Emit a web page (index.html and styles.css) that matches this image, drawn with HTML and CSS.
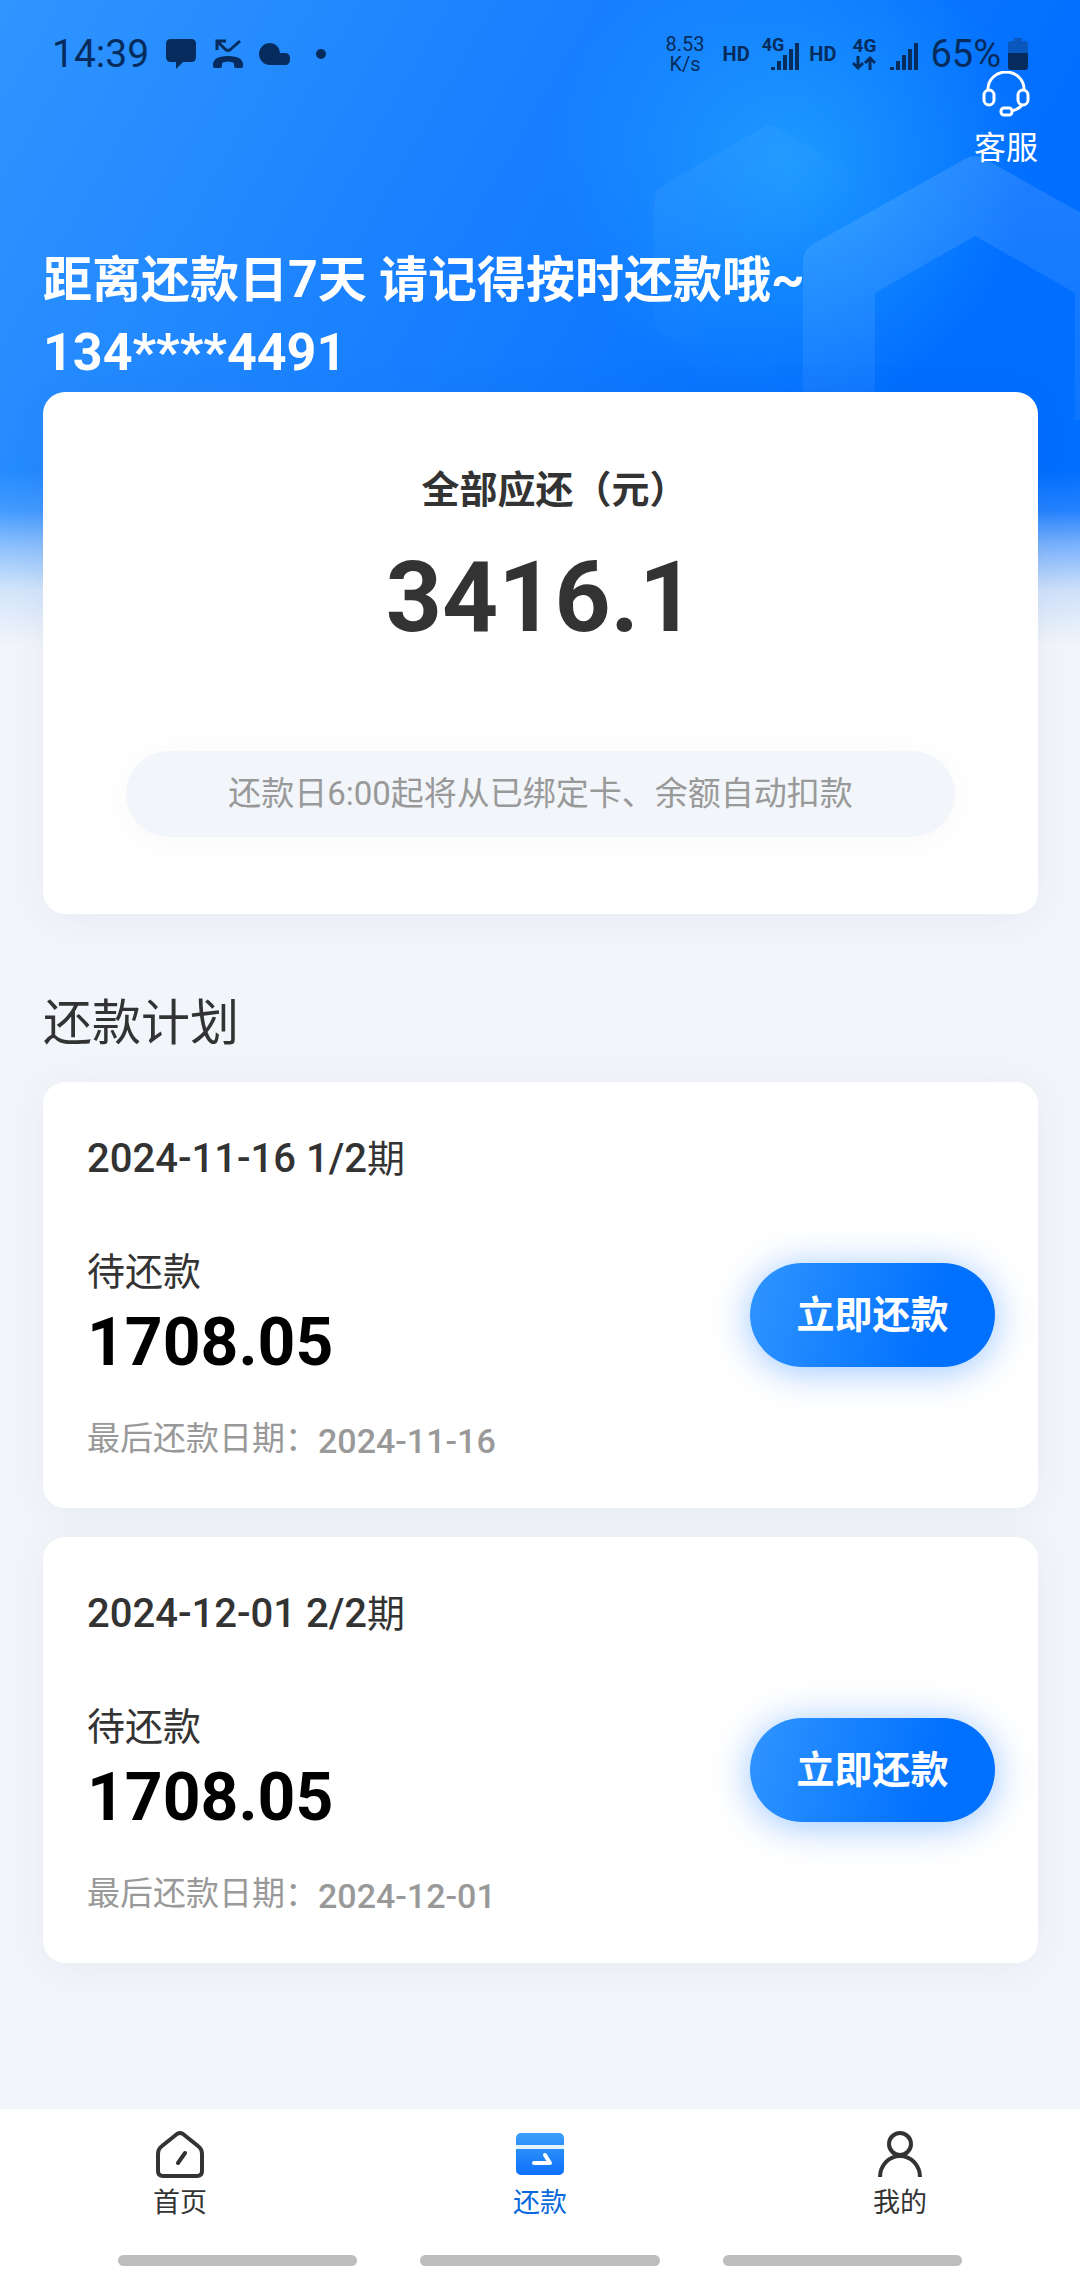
FILE: index.html
```html
<!DOCTYPE html>
<html lang="zh-CN">
<head>
<meta charset="utf-8">
<meta name="viewport" content="width=device-width, initial-scale=1">
<title>还款</title>
<link rel="stylesheet" href="styles.css">
</head>
<body>
<div class="page">
  <svg class="backdrop" viewBox="0 0 480 640" aria-hidden="true">
    <defs>
      <linearGradient id="band" x1="0" y1="0" x2="0" y2="1">
        <stop offset="0" stop-color="#fff" stop-opacity=".12"/>
        <stop offset="1" stop-color="#fff" stop-opacity=".05"/>
      </linearGradient>
      <linearGradient id="hex" x1="0" y1="0" x2=".8" y2=".9">
        <stop offset="0" stop-color="#fff" stop-opacity=".06"/>
        <stop offset=".65" stop-color="#fff" stop-opacity="0"/>
      </linearGradient>
    </defs>
    <path fill="url(#hex)" d="M162 128Q170 123 178 128L278 186Q286 191 286 200V318Q286 328 278 333L178 392Q170 397 162 392L62 333Q54 328 54 318V200Q54 191 62 186Z"/>
    <path fill="url(#band)" d="M365 159Q375 153 385 159L547 250V420H475V293L375 236L275 293V420H203V262Q203 250 213 244Z"/>
  </svg>

  <header class="status">
    <div class="status-group">
      <time class="clock">14:39</time>
      <svg class="note-icon" viewBox="0 0 32 32" aria-hidden="true"><path d="M6 1H26Q31 1 31 6V19Q31 24 26 24H18L11 31V24H6Q1 24 1 19V6Q1 1 6 1Z"/></svg>
      <svg class="note-icon" viewBox="0 0 32 32" aria-hidden="true"><path d="M5 12V3H14M5 3L13 11Q16 14 19 11L28 3" fill="none" stroke="currentColor" stroke-width="3"/><path d="M1 28Q0 18 16 18T31 28Q31 30 29 30H24Q22 30 22 28V25Q16 22 10 25V28Q10 30 8 30H3Q1 30 1 28Z"/></svg>
      <svg class="note-icon" viewBox="0 0 32 32" aria-hidden="true"><path d="M11 5A10 10 0 0 1 21 15H25A5 5 0 0 1 31 20V22A5 5 0 0 1 25 27H11A11 11 0 0 1 11 5Z"/></svg>
      <span class="more-dot"></span>
    </div>
    <div class="status-group">
      <span class="speed">8.53<br>K/s</span>
      <span class="hd">HD</span>
      <span class="signal">
        <span class="net-small">4G</span>
        <svg class="bars" viewBox="0 0 30 30" aria-hidden="true"><path d="M4 26V29M10 20V29M16 14V29M22 8V29M28 2V29"/></svg>
      </span>
      <span class="hd hd-second">HD</span>
      <span class="net">4G<svg class="arrows" viewBox="0 0 24 16" aria-hidden="true"><path d="M6 1V13M1 8L6 13L11 8M18 15V3M13 8L18 3L23 8"/></svg></span>
      <svg class="bars bars-second" viewBox="0 0 30 30" aria-hidden="true"><path d="M4 26V29M10 20V29M16 14V29M22 8V29M28 2V29"/></svg>
      <span class="percent">65%</span>
      <svg class="battery" viewBox="0 0 22 34" aria-hidden="true"><path fill="#0a57bd" d="M7 1H15V4H18Q21 4 21 7V16H1V7Q1 4 4 4H7Z"/><path d="M1 16H21V30Q21 33 18 33H4Q1 33 1 30Z"/></svg>
    </div>
  </header>

  <main class="content">
    <a class="service" href="#service">
      <svg class="service-icon" viewBox="0 0 48 46" aria-hidden="true"><path d="M6 20V18A18 17 0 0 1 42 18V20"/><rect x="2" y="19" width="10" height="15" rx="5"/><rect x="36" y="19" width="10" height="15" rx="5"/><path d="M40 34Q36 39 29 40"/><rect x="19" y="37" width="11" height="7" rx="3"/></svg>
      客服
    </a>
    <h1 class="reminder">距离还款日<span class="latin">7</span>天 请记得按时还款哦<span class="latin">~</span><br><span class="latin">134****4491</span></h1>

    <section class="card total">
      <h2 class="total-label">全部应还（元）</h2>
      <p class="total-amount">3416.1</p>
      <p class="notice">还款日6:00起将从已绑定卡、余额自动扣款</p>
    </section>

    <h2 class="plan-title">还款计划</h2>
    <ul class="plans">
      <li class="card plan">
        <h3 class="plan-date"><span class="plan-term">2024-11-16 1/2</span>期</h3>
        <div class="plan-row">
          <div>
            <p class="due-label">待还款</p>
            <p class="due-amount">1708.05</p>
          </div>
          <button class="pay" type="button">立即还款</button>
        </div>
        <p class="deadline"><span>最后还款日期：</span><time>2024-11-16</time></p>
      </li>
      <li class="card plan">
        <h3 class="plan-date"><span class="plan-term">2024-12-01 2/2</span>期</h3>
        <div class="plan-row">
          <div>
            <p class="due-label">待还款</p>
            <p class="due-amount">1708.05</p>
          </div>
          <button class="pay" type="button">立即还款</button>
        </div>
        <p class="deadline"><span>最后还款日期：</span><time>2024-12-01</time></p>
      </li>
    </ul>
  </main>

  <footer class="bottom">
    <nav class="tabs">
      <a class="tab" href="#home">
        <svg class="tab-icon" viewBox="0 0 48 48" aria-hidden="true"><path d="M21 3Q24 1 27 3L42 15Q46 18 46 23V40Q46 45 41 45H7Q2 45 2 40V23Q2 18 6 15ZM29 22L22 32"/></svg>
        首页
      </a>
      <a class="tab tab-active" href="#repay" aria-current="page">
        <svg class="tab-icon" viewBox="0 0 48 48" aria-hidden="true">
          <defs><linearGradient id="cardfill" x1="0" y1="0" x2="0" y2="1"><stop offset="0" stop-color="#3ba0fa"/><stop offset="1" stop-color="#0d70fb"/></linearGradient></defs>
          <rect x="0" y="2" width="48" height="42" rx="5" fill="url(#cardfill)" stroke="none"/>
          <path stroke="#e4f2ff" stroke-linecap="butt" d="M0 16H48"/>
          <path stroke="#fff" d="M18 32H34L29 24"/>
        </svg>
        还款
      </a>
      <a class="tab" href="#mine">
        <svg class="tab-icon" viewBox="0 0 48 48" aria-hidden="true"><circle cx="24" cy="13" r="11"/><path stroke-linecap="butt" d="M4 46A20 21 0 0 1 44 46"/></svg>
        我的
      </a>
    </nav>
    <div class="gesture"><span></span><span></span><span></span></div>
  </footer>
</div>
</body>
</html>
```

FILE: styles.css
```css
* {
  box-sizing: border-box;
}

body,
h1,
h2,
h3,
p,
ul {
  margin: 0;
  padding: 0;
}

body {
  font-family: Roboto, "Noto Sans CJK SC", sans-serif;
  color: #333;
  background: #f2f5fa;
}

.page {
  position: relative;
  display: flex;
  flex-direction: column;
  min-height: 100vh;
  background:
    linear-gradient(to bottom, rgba(242, 245, 250, 0) 470px, rgba(242, 245, 250, 0.15) 510px, rgba(242, 245, 250, 0.5) 545px, rgba(242, 245, 250, 0.85) 590px, #f2f5fa 645px),
    radial-gradient(circle at 790px 165px, rgba(34, 165, 255, 0.75), rgba(34, 165, 255, 0) 240px),
    linear-gradient(120deg, #3095ff 0, #157dff 580px, #006eff 980px);
}

.backdrop {
  position: absolute;
  top: 0;
  right: 0;
  width: 480px;
  height: 640px;
}

/* System status bar */
.status {
  position: relative;
  display: flex;
  justify-content: space-between;
  height: 71px;
  padding: 36px 51px 0 52px;
  color: #052c5c;
}

.status svg {
  fill: currentColor;
}

.status-group {
  display: flex;
  align-items: center;
}

.clock {
  margin-right: 16px;
  font-size: 39px;
  line-height: 40px;
}

.note-icon {
  width: 32px;
  height: 32px;
  margin-right: 15px;
}

.more-dot {
  width: 10px;
  height: 10px;
  margin-left: 10px;
  border-radius: 50%;
  background: currentColor;
}

.speed {
  margin-right: 18px;
  font-size: 20px;
  line-height: 20px;
  text-align: center;
}

.hd {
  margin-right: 12px;
  font-size: 20px;
  font-weight: 700;
}

.hd-second {
  margin-right: 16px;
}

.signal {
  display: flex;
  align-items: flex-start;
}

.net-small {
  font-size: 18px;
  font-weight: 700;
  line-height: 16px;
}

.status .bars {
  width: 30px;
  height: 30px;
  margin: 4px 10px 0 -15px;
  fill: none;
  stroke: currentColor;
  stroke-width: 4;
}

.status .bars-second {
  margin: 4px 12px 0 12px;
}

.net {
  display: flex;
  flex-direction: column;
  align-items: center;
  font-size: 19px;
  font-weight: 700;
  line-height: 18px;
}

.status .arrows {
  width: 24px;
  height: 16px;
  fill: none;
  stroke: currentColor;
  stroke-width: 3;
}

.percent {
  margin-right: 6px;
  font-size: 38px;
  line-height: 36px;
}

.battery {
  width: 22px;
  height: 34px;
}

/* Content */
.content {
  position: relative;
  display: flex;
  flex-direction: column;
  padding: 0 42px 0 43px;
}

.service {
  display: flex;
  flex-direction: column;
  align-items: center;
  align-self: flex-end;
  gap: 8px;
  font-size: 32px;
  line-height: 46px;
  color: #fff;
  text-decoration: none;
}

.service-icon {
  width: 48px;
  height: 46px;
  fill: none;
  stroke: #fff;
  stroke-width: 3;
}

.reminder {
  margin: 73px 0 2px;
  font-size: 49px;
  font-weight: 700;
  line-height: 72px;
  color: #fff;
}

.latin {
  font-size: 52px;
}

.card {
  border-radius: 22px;
  background: #fff;
  box-shadow: 0 4px 40px rgba(60, 70, 100, 0.06);
}

.total {
  display: flex;
  flex-direction: column;
  align-items: center;
  padding: 70px 83px 77px;
}

.total-label {
  padding-left: 28px;
  font-size: 38px;
  font-weight: 700;
  line-height: 56px;
}

.total-amount {
  margin: 22px 0 96px;
  font-size: 98px;
  font-weight: 700;
  line-height: 115px;
}

.notice {
  align-self: stretch;
  border-radius: 43px;
  background: #f2f5fa;
  box-shadow: 0 4px 40px rgba(60, 70, 100, 0.03);
  font-size: 33px;
  line-height: 86px;
  text-align: center;
  color: #999;
}

.plan-title {
  margin: 74px 0 22px;
  font-size: 49px;
  font-weight: 400;
  line-height: 72px;
}

.plans {
  display: grid;
  gap: 29px;
  list-style: none;
}

.plan {
  padding: 49px 43px 39px 44px;
}

.plan-date {
  font-size: 38px;
  font-weight: 400;
  line-height: 56px;
}

.plan-term {
  font-size: 40px;
  font-weight: 500;
}

.plan-row {
  display: flex;
  align-items: center;
  justify-content: space-between;
  margin: 57px 0 25px;
}

.due-label {
  font-size: 38px;
  line-height: 56px;
}

.due-amount {
  font-size: 66px;
  font-weight: 700;
  line-height: 86px;
  color: #000;
}

.pay {
  width: 245px;
  height: 104px;
  padding: 0 0 8px;
  border: 0;
  border-radius: 52px;
  background: linear-gradient(105deg, #3095ff, #0070ff 75%);
  box-shadow: 0 4px 38px rgba(0, 112, 255, 0.4);
  font: inherit;
  font-size: 38px;
  font-weight: 700;
  color: #fff;
}

.deadline {
  display: flex;
  font-size: 33px;
  line-height: 56px;
  color: #999;
}

.deadline time {
  padding-top: 2px;
  font-size: 34px;
  font-weight: 500;
}

/* Bottom navigation */
.bottom {
  position: relative;
  margin-top: auto;
  background: #fff;
}

.tabs {
  display: grid;
  grid-template-columns: repeat(3, 1fr);
}

.tab {
  display: flex;
  flex-direction: column;
  align-items: center;
  gap: 4px;
  padding-top: 22px;
  font-size: 27px;
  line-height: 40px;
  color: #333;
  text-decoration: none;
}

.tab-active {
  color: #0a6add;
}

.tab-icon {
  width: 48px;
  height: 48px;
  fill: none;
  stroke: #333;
  stroke-width: 4;
  stroke-linecap: round;
  stroke-linejoin: round;
}

.gesture {
  display: grid;
  grid-template-columns: repeat(3, 1fr);
  gap: 63px;
  padding: 32px 118px 14px;
}

.gesture span {
  height: 11px;
  border-radius: 6px;
  background: #bdbdbd;
}
```
